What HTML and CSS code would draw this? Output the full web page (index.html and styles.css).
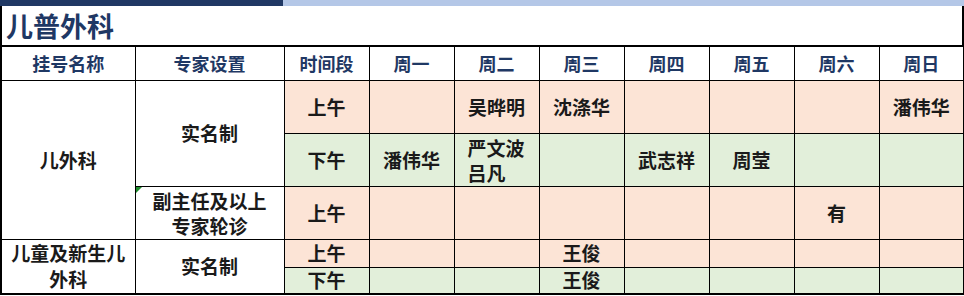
FILE: index.html
```html
<!DOCTYPE html>
<html lang="zh-CN">
<head>
<meta charset="utf-8">
<title>儿普外科</title>
<link rel="stylesheet" href="styles.css">
</head>
<body>
<div class="page">
  <div class="topbar"><div class="seg-dark"></div><div class="seg-light"></div></div>
  <div class="title">儿普外科</div>
  <table class="sched">
    <colgroup>
      <col class="c1"><col class="c2"><col class="c3">
      <col class="cd"><col class="cd"><col class="cd"><col class="cd"><col class="cd"><col class="cd"><col class="cd">
    </colgroup>
    <thead>
      <tr class="r-head">
        <th>挂号名称</th><th>专家设置</th><th>时间段</th>
        <th>周一</th><th>周二</th><th>周三</th><th>周四</th><th>周五</th><th>周六</th><th>周日</th>
      </tr>
    </thead>
    <tbody>
      <tr class="r-big">
        <td rowspan="3" class="plain">儿外科</td>
        <td rowspan="2" class="plain">实名制</td>
        <td class="am">上午</td>
        <td class="am"></td><td class="am">吴晔明</td><td class="am">沈涤华</td><td class="am"></td><td class="am"></td><td class="am"></td><td class="am">潘伟华</td>
      </tr>
      <tr class="r-big">
        <td class="pm">下午</td>
        <td class="pm">潘伟华</td><td class="pm left">严文波<br>吕凡</td><td class="pm"></td><td class="pm">武志祥</td><td class="pm">周莹</td><td class="pm"></td><td class="pm"></td>
      </tr>
      <tr class="r-big">
        <td class="plain two corner">副主任及以上<br>专家轮诊<span class="flag"></span></td>
        <td class="am">上午</td>
        <td class="am"></td><td class="am"></td><td class="am"></td><td class="am"></td><td class="am"></td><td class="am">有</td><td class="am"></td>
      </tr>
      <tr class="r-am">
        <td rowspan="2" class="plain two2">儿童及新生儿<br>外科</td>
        <td rowspan="2" class="plain">实名制</td>
        <td class="am">上午</td>
        <td class="am"></td><td class="am"></td><td class="am">王俊</td><td class="am"></td><td class="am"></td><td class="am"></td><td class="am"></td>
      </tr>
      <tr class="r-pm">
        <td class="pm">下午</td>
        <td class="pm"></td><td class="pm"></td><td class="pm">王俊</td><td class="pm"></td><td class="pm"></td><td class="pm"></td><td class="pm"></td>
      </tr>
    </tbody>
  </table>
</div>
</body>
</html>
```

FILE: styles.css
```css
html, body {
  margin: 0;
  padding: 0;
  background: #ffffff;
}

body {
  font-family: "Noto Sans CJK SC", "Noto Sans", sans-serif;
}

.page {
  width: 964px;
}

.topbar {
  display: flex;
  height: 6px;
}

.seg-dark {
  width: 283px;
  background: #203864;
}

.seg-light {
  flex: 1;
  background: #b4c7e7;
}

.title {
  height: 39px;
  box-sizing: border-box;
  border-left: 2px solid #000;
  border-right: 2px solid #000;
  padding-left: 4px;
  font-size: 27px;
  font-weight: 700;
  line-height: 40px;
  color: #1f3864;
}

.sched {
  width: 964px;
  table-layout: fixed;
  border-collapse: collapse;
  border: 2px solid #000;
}

.c1 { width: 134px; }
.c2 { width: 149px; }
.c3 { width: 85px; }
.cd { width: 85px; }

.sched th,
.sched td {
  border: 1px solid #000;
  padding: 0;
  text-align: center;
  vertical-align: middle;
  font-weight: 700;
}

.sched th {
  font-size: 18px;
  color: #1f3864;
  line-height: 22px;
}

.sched td {
  font-size: 19px;
  color: #1a1a1a;
  line-height: 24px;
}

.r-head { height: 34px; }
.r-big { height: 53px; }
.r-am { height: 28px; }
.r-pm { height: 27px; }

.plain { background: #ffffff; }
.am { background: #fce4d6; }
.pm { background: #e2efda; }

.sched td.left {
  text-align: left;
  padding-left: 13px;
  line-height: 25px;
}

.sched td.two { line-height: 25px; }
.sched td.two2 { line-height: 26px; }

.corner { position: relative; }

.flag {
  position: absolute;
  left: 0;
  top: 0;
  width: 0;
  height: 0;
  border-top: 6px solid #1e8c2c;
  border-right: 6px solid transparent;
}
```
